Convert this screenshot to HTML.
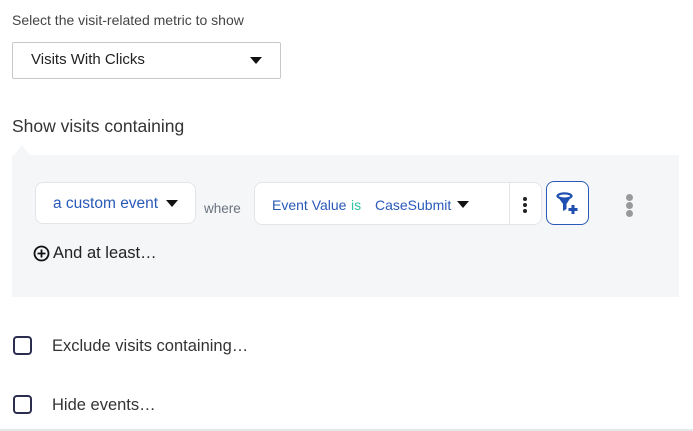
<!DOCTYPE html>
<html><head><style>
*{margin:0;padding:0;box-sizing:border-box}
body{width:693px;height:431px;background:#fff;font-family:"Liberation Sans",sans-serif;position:relative;overflow:hidden;color:#333}
.a{position:absolute;white-space:nowrap}
.tri{position:absolute;width:0;height:0;border-left:6px solid transparent;border-right:6px solid transparent;border-top:7px solid #111}
</style></head><body>
<div class="a" style="left:12px;top:12px;font-size:14px;color:#444">Select the visit-related metric to show</div>
<div class="a" style="left:12px;top:42px;width:269px;height:37px;border:1px solid #c8c8cc;border-radius:2px"></div>
<div class="a" style="left:31px;top:51px;font-size:15px;color:#222">Visits With Clicks</div>
<div class="tri" style="left:250px;top:57px"></div>
<div class="a" style="left:12px;top:116px;font-size:17.5px;color:#333">Show visits containing</div>
<div class="a" style="left:12px;top:155px;width:667px;height:142px;background:#f5f6f8"></div>
<div class="a" style="top:145px;width:0;height:0;border-left:8px solid transparent;border-right:8px solid transparent;border-bottom:10px solid #f5f6f8;left:14px"></div>
<div class="a" style="left:35px;top:182px;width:161px;height:42px;background:#fff;border:1px solid #e4e5e8;border-radius:8px"></div>
<div class="a" style="left:53px;top:195px;font-size:15.5px;color:#2a5ab8">a custom event</div>
<div class="tri" style="left:166px;top:200px"></div>
<div class="a" style="left:204px;top:201px;font-size:13.5px;color:#6b7280">where</div>
<div class="a" style="left:254px;top:182px;width:288px;height:43px;background:#fff;border:1px solid #e4e5e8;border-radius:8px"></div>
<div class="a" style="left:509px;top:183px;width:1px;height:41px;background:#e4e5e8"></div>
<div class="a" style="left:272px;top:197px;font-size:14px;color:#2a5ab8">Event Value</div>
<div class="a" style="left:351px;top:197px;font-size:14px;color:#2ec4a0">is</div>
<div class="a" style="left:375px;top:197px;font-size:14px;color:#2a5ab8">CaseSubmit</div>
<div class="tri" style="left:457px;top:201px"></div>
<div class="a" style="left:523px;top:197px;width:4px;height:4px;border-radius:50%;background:#222;box-shadow:0 6px 0 #222,0 12px 0 #222"></div>
<div class="a" style="left:546px;top:181px;width:43px;height:44px;border:1.5px solid #2a5ab8;border-radius:8px;background:#fff"></div>
<svg class="a" style="left:556px;top:192px" width="26" height="24" viewBox="0 0 26 24"><ellipse cx="8.5" cy="4" rx="7" ry="2.6" fill="none" stroke="#1f4fb0" stroke-width="2.2"/><path d="M2 5 L7 12 V19 L10.5 17 V12 L15 5 Q8.5 9 2 5Z" fill="#1f4fb0"/><path d="M17 13 V22 M12.5 17.5 H21.5" stroke="#1f4fb0" stroke-width="3"/></svg>
<div class="a" style="left:626px;top:194px;width:7px;height:7px;border-radius:50%;background:#999;box-shadow:0 8px 0 #999,0 16px 0 #999"></div>
<svg class="a" style="left:33px;top:245px" width="17" height="17"><circle cx="8.5" cy="8.5" r="7" fill="none" stroke="#111" stroke-width="1.8"/><path d="M8.5 4.5v8M4.5 8.5h8" stroke="#111" stroke-width="1.8"/></svg>
<div class="a" style="left:53px;top:244px;font-size:16.5px;color:#222">And at least…</div>
<div class="a" style="left:13px;top:336px;width:19px;height:19px;border:2px solid #2b2d4e;border-radius:4px"></div>
<div class="a" style="left:52px;top:337px;font-size:16.5px;color:#333">Exclude visits containing…</div>
<div class="a" style="left:13px;top:395px;width:19px;height:19px;border:2px solid #2b2d4e;border-radius:4px"></div>
<div class="a" style="left:52px;top:396px;font-size:16.5px;color:#333">Hide events…</div>
<div class="a" style="left:0;top:429px;width:693px;height:2px;background:#e6e7e9"></div>
</body></html>
